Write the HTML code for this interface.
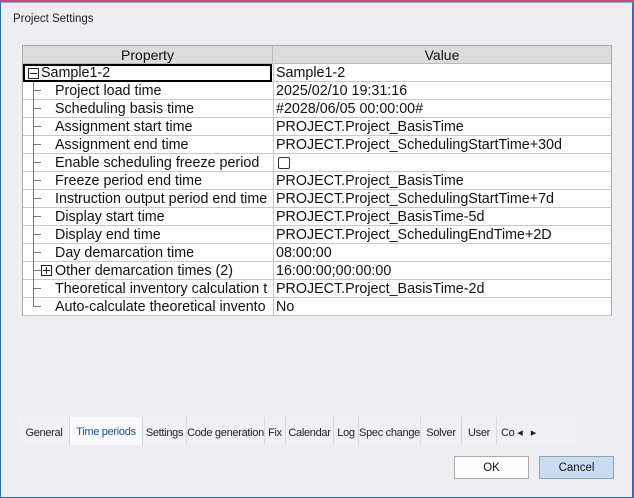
<!DOCTYPE html>
<html><head><style>
*{margin:0;padding:0;box-sizing:border-box}
body{width:634px;height:498px;background:#c04a8a;position:relative;overflow:hidden;font-family:"Liberation Sans",Arial,sans-serif}
.dlg{position:absolute;left:0;top:2px;width:633px;height:496px;background:#eeeef2;border:1px solid #2b6cb0;border-top:1px solid #9aa;}
.title{position:absolute;left:13px;top:13px;font-size:11.5px;color:#222}
.grid{position:absolute;left:22px;top:45px;width:590px;height:271px;background:#fff;border:1px solid #aaa}
.hd{position:absolute;top:0;height:18px;background:#dcdcdc;border-bottom:1px solid #bbb;font-size:14px;text-align:center;line-height:19px;color:#111}
.row{position:absolute;left:0;width:588px;height:18px;border-bottom:1px solid #c8c8c8;font-size:14.3px;line-height:19px;color:#111;white-space:nowrap}
.k{position:absolute;left:32px;width:216px;overflow:hidden}
.v{position:absolute;left:250px;border-left:1px solid #c8c8c8;padding-left:2px;height:18px;width:338px}
.tl{position:absolute;left:10px;top:0;width:1px;height:18px;background:#777}
.th{position:absolute;left:10px;top:8px;width:8px;height:1px;background:#777}
.box{position:absolute;width:11px;height:11px;border:1px solid #222;background:#fff}
.box:before{content:"";position:absolute;left:1px;top:4px;width:7px;height:1px;background:#222}
.plus:after{content:"";position:absolute;left:4px;top:1px;width:1px;height:7px;background:#222}
.tabs{position:absolute;left:19px;top:417px;height:28px;width:558px;background:#f5f5f8;border-bottom:1px solid #ddd}
.tab{position:absolute;top:0;height:28px;font-size:11px;letter-spacing:-0.3px;line-height:32px;color:#222;border-right:1px solid #d6d6dc;text-align:center;background:#f0f0f3;white-space:nowrap;overflow:hidden}
.btn{position:absolute;top:456px;height:23px;width:75px;font-size:11.5px;text-align:center;line-height:22px;border:1px solid #aaa;background:#fdfdfd;color:#111}
</style></head><body>
<div class="dlg"></div>
<div class="title">Project Settings</div>
<div class="grid">
<div class="hd" style="left:0;width:250px;border-right:1px solid #bbb">Property</div>
<div class="hd" style="left:250px;width:338px">Value</div>
<div class="row" style="top:18px"><div style="position:absolute;left:0;top:0;width:249px;height:18px;border:2px solid #000"></div><div class="box" style="left:5px;top:4px"></div><span style="position:absolute;left:18px">Sample1-2</span><div class="v">Sample1-2</div></div>
<div class="row" style="top:36px"><div class="tl"></div><div class="th"></div><span class="k">Project load time</span><div class="v">2025/02/10 19:31:16</div></div>
<div class="row" style="top:54px"><div class="tl"></div><div class="th"></div><span class="k">Scheduling basis time</span><div class="v">#2028/06/05 00:00:00#</div></div>
<div class="row" style="top:72px"><div class="tl"></div><div class="th"></div><span class="k">Assignment start time</span><div class="v">PROJECT.Project_BasisTime</div></div>
<div class="row" style="top:90px"><div class="tl"></div><div class="th"></div><span class="k">Assignment end time</span><div class="v">PROJECT.Project_SchedulingStartTime+30d</div></div>
<div class="row" style="top:108px"><div class="tl"></div><div class="th"></div><span class="k">Enable scheduling freeze period</span><div class="v"><span style="position:absolute;left:4px;top:3px;width:12px;height:12px;border:1px solid #333;border-radius:2px"></span></div></div>
<div class="row" style="top:126px"><div class="tl"></div><div class="th"></div><span class="k">Freeze period end time</span><div class="v">PROJECT.Project_BasisTime</div></div>
<div class="row" style="top:144px"><div class="tl"></div><div class="th"></div><span class="k">Instruction output period end time</span><div class="v">PROJECT.Project_SchedulingStartTime+7d</div></div>
<div class="row" style="top:162px"><div class="tl"></div><div class="th"></div><span class="k">Display start time</span><div class="v">PROJECT.Project_BasisTime-5d</div></div>
<div class="row" style="top:180px"><div class="tl"></div><div class="th"></div><span class="k">Display end time</span><div class="v">PROJECT.Project_SchedulingEndTime+2D</div></div>
<div class="row" style="top:198px"><div class="tl"></div><div class="th"></div><span class="k">Day demarcation time</span><div class="v">08:00:00</div></div>
<div class="row" style="top:216px"><div class="tl"></div><div class="th"></div><div class="box plus" style="left:18px;top:3px"></div><span class="k">Other demarcation times (2)</span><div class="v">16:00:00;00:00:00</div></div>
<div class="row" style="top:234px"><div class="tl"></div><div class="th"></div><span class="k">Theoretical inventory calculation t</span><div class="v">PROJECT.Project_BasisTime-2d</div></div>
<div class="row" style="top:252px"><div class="tl" style="height:9px"></div><div class="th"></div><span class="k">Auto-calculate theoretical invento</span><div class="v">No</div></div>
</div>
<div class="tabs">
<div class="tab" style="left:0;width:51px">General</div>
<div class="tab" style="left:51px;width:73px;background:#fafafc;color:#1a4f8f;line-height:30px">Time periods</div>
<div class="tab" style="left:124px;width:44px">Settings</div>
<div class="tab" style="left:168px;width:78px">Code generation</div>
<div class="tab" style="left:246px;width:21px">Fix</div>
<div class="tab" style="left:267px;width:48px">Calendar</div>
<div class="tab" style="left:315px;width:25px">Log</div>
<div class="tab" style="left:340px;width:62px">Spec change</div>
<div class="tab" style="left:402px;width:41px">Solver</div>
<div class="tab" style="left:443px;width:35px">User</div>
<div class="tab" style="left:478px;width:80px;text-align:left;padding-left:4px;border:none">Co ◂ &nbsp;&nbsp;▸</div>
</div>
<div class="btn" style="left:454px">OK</div>
<div class="btn" style="left:539px;background:#c9dcf2;border-color:#8aa">Cancel</div>
</body></html>
